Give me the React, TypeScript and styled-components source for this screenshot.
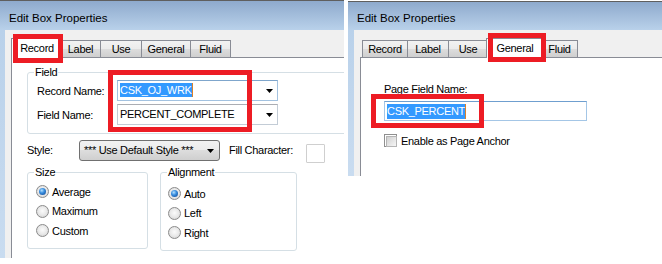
import React from "react";
import styled, { createGlobalStyle, css } from "styled-components";

const Global = createGlobalStyle`
  html, body { margin: 0; padding: 0; background: #fff; }
  body { font-family: "Liberation Sans", Arial, sans-serif; font-size: 11px; letter-spacing: -0.3px; color: #000; }
  * { box-sizing: border-box; }
`;

const Page = styled.div`
  display: flex;
  align-items: flex-start;
  width: 662px;
  height: 264px;
  overflow: hidden;
  background: #fff;
`;

const Window = styled.div<{ $w?: number; $h: number; $top: number; $left: number }>`
  position: relative;
  display: flex;
  flex-direction: column;
  flex: ${(p) => (p.$w ? "0 0 auto" : "1 1 auto")};
  width: ${(p) => (p.$w ? `${p.$w}px` : "auto")};
  height: ${(p) => p.$h}px;
  margin-top: ${(p) => p.$top}px;
  margin-left: ${(p) => p.$left}px;
  border-top: 1px solid #5f5f5f;
  overflow: hidden;
`;

const TitleBar = styled.div<{ $h: number }>`
  flex: 0 0 ${(p) => p.$h}px;
  height: ${(p) => p.$h}px;
  padding: ${(p) => p.$h - 19}px 0 0 9px;
  background: linear-gradient(to bottom, #8eaacd, #b9d1ea);
  font-size: 11.5px;
  letter-spacing: 0;
  line-height: 14px;
  white-space: nowrap;
`;

const Frame = styled.div`
  flex: 1 1 auto;
  display: flex;
  min-height: 0;
`;

const Edge = styled.div<{ $w: number }>`
  flex: 0 0 ${(p) => p.$w}px;
  background: linear-gradient(to bottom, #b9d1ea, #c9dcf0);
`;

const Client = styled.div`
  flex: 1 1 auto;
  display: flex;
  flex-direction: column;
  padding: 8px 0 0 6px;
  background: #f0f0f0;
  min-width: 0;
`;

const TabStrip = styled.div`
  position: relative;
  z-index: 1;
  display: flex;
  align-items: flex-end;
  height: 19px;
  padding-left: 2px;
`;

const Tab = styled.div<{ $w: number; $sel?: boolean }>`
  flex: 0 0 auto;
  width: ${(p) => p.$w}px;
  height: 17px;
  border: 1px solid #898c95;
  border-bottom: none;
  border-left-width: 0;
  background: linear-gradient(to bottom, #f2f2f2 0%, #ebebeb 50%, #dddddd 50%, #cfcfcf 100%);
  text-align: center;
  line-height: 16px;
  white-space: nowrap;
  &:first-child { border-left-width: 1px; }
  ${(p) =>
    p.$sel &&
    css`
      width: ${p.$w + 4}px;
      height: 20px;
      margin: 0 -2px -1px;
      border-left-width: 1px;
      background: #fff;
      line-height: 18px;
      position: relative;
      z-index: 2;
    `}
`;

const Panel = styled.div<{ $pad: string }>`
  flex: 1 1 auto;
  display: flex;
  flex-direction: column;
  align-items: flex-start;
  padding: ${(p) => p.$pad};
  background: #fff;
  border-top: 1px solid #898c95;
  border-left: 1px solid #898c95;
  min-width: 0;
`;

const Group = styled.fieldset<{ $w: number; $mt: number }>`
  flex: 0 0 auto;
  margin: ${(p) => p.$mt}px 0 0 0;
  padding: 0;
  min-width: 0;
  width: ${(p) => p.$w}px;
  border: 1px solid #d5dfe5;
  border-radius: 3px;
`;

const Legend = styled.legend`
  margin-left: 6px;
  padding: 0 1px;
  font-size: 11px;
  line-height: 12px;
`;

const FieldGrid = styled.div`
  display: grid;
  grid-template-columns: 80px 161px;
  grid-auto-rows: 21px;
  row-gap: 3px;
  align-items: center;
  padding: 2px 0 8px 9px;
`;

const Combo = styled.div<{ $focus?: boolean }>`
  display: flex;
  align-items: center;
  height: 21px;
  padding: 0 4px 0 2px;
  background: #fff;
  border: 1px solid ${(p) => (p.$focus ? "#a3c2e0" : "#c3ccd6")};
  border-top-color: ${(p) => (p.$focus ? "#7fa6cc" : "#abadb3")};
`;

const ComboText = styled.span`
  flex: 1 1 auto;
  white-space: nowrap;
  line-height: 13px;
`;

const Selected = styled.span`
  background: #3399ff;
  color: #fff;
  padding: 1px 0;
  border-right: 1px solid #d9822b;
`;

const Arrow = () => (
  <svg width="7" height="4" viewBox="0 0 7 4" style={{ flex: "0 0 auto" }}>
    <path d="M0 0H7L3.5 4Z" fill="#000" />
  </svg>
);

const StyleRow = styled.div`
  display: flex;
  align-items: flex-start;
  height: 20px;
  margin-top: 6px;
`;

const RowLabel = styled.span<{ $w: number; $ml?: number }>`
  flex: 0 0 ${(p) => p.$w}px;
  margin-left: ${(p) => p.$ml ?? 0}px;
  line-height: 21px;
  white-space: nowrap;
`;

const StyleButton = styled.div`
  flex: 0 0 141px;
  display: flex;
  align-items: center;
  height: 21px;
  padding: 0 5px 0 4px;
  border: 1px solid #707070;
  border-radius: 3px;
  background: linear-gradient(to bottom, #f2f2f2 0%, #ebebeb 50%, #dddddd 50%, #cfcfcf 100%);
  white-space: nowrap;
`;

const FillBox = styled.div`
  flex: 0 0 19px;
  width: 19px;
  height: 19px;
  margin-top: 4px;
  border: 1px solid #cfcfcf;
  border-radius: 1px;
  background: #fff;
`;

const GroupsRow = styled.div`
  display: flex;
  align-items: flex-start;
  gap: 12px;
  margin-top: 6px;
`;

const RadioList = styled.div<{ $pt: number; $pl: number }>`
  display: flex;
  flex-direction: column;
  padding: ${(p) => p.$pt}px 0 7px ${(p) => p.$pl}px;
`;

const RadioRow = styled.div`
  display: flex;
  align-items: center;
  gap: 3px;
  height: 19.5px;
`;

const RadioDot = styled.span<{ $on?: boolean }>`
  position: relative;
  flex: 0 0 13px;
  width: 13px;
  height: 13px;
  border-radius: 50%;
  border: 1px solid #8b8b8b;
  background: radial-gradient(circle at 50% 45%, #fbfbfb 0%, #e9e9e9 50%, #cdcdcd 100%);
  ${(p) =>
    p.$on &&
    css`
      &::after {
        content: "";
        position: absolute;
        left: 2px;
        top: 2px;
        width: 7px;
        height: 7px;
        border-radius: 50%;
        background: radial-gradient(circle at 40% 35%, #b6e2ff 0%, #3a8fe0 40%, #0c3f8a 100%);
      }
    `}
`;

const PlainLabel = styled.div`
  line-height: 13px;
  white-space: nowrap;
`;

const TextInput = styled.div`
  display: flex;
  align-items: center;
  width: 203px;
  height: 20px;
  margin-top: 5px;
  padding: 0 2px;
  border: 1px solid #a4c6e6;
  border-top-color: #6f9fcf;
  background: #fff;
  line-height: 13px;
`;

const CheckRow = styled.div`
  display: flex;
  align-items: center;
  gap: 4px;
  margin-top: 13px;
  white-space: nowrap;
`;

const CheckBox = styled.span`
  flex: 0 0 13px;
  width: 13px;
  height: 13px;
  border: 1px solid #8f8f8f;
  padding: 1px;
  background: #fff;
  &::before {
    content: "";
    display: block;
    width: 100%;
    height: 100%;
    border: 1px solid #b4b4b4;
    background: linear-gradient(135deg, #d0d0d0, #f6f6f6);
  }
`;

const Callout = styled.div<{ $x: number; $y: number; $w: number; $h: number }>`
  position: absolute;
  left: ${(p) => p.$x}px;
  top: ${(p) => p.$y}px;
  width: ${(p) => p.$w}px;
  height: ${(p) => p.$h}px;
  border: 5px solid #ed1c24;
  z-index: 5;
  pointer-events: none;
`;

const tabNames = ["Record", "Label", "Use", "General", "Fluid"];

function Tabs({ widths, sel }: { widths: number[]; sel: number }) {
  return (
    <TabStrip>
      {tabNames.map((n, i) => (
        <Tab key={n} $w={widths[i]} $sel={i === sel}>
          {n}
        </Tab>
      ))}
    </TabStrip>
  );
}

function Radio({ label, on }: { label: string; on?: boolean }) {
  return (
    <RadioRow>
      <RadioDot $on={on} />
      <span>{label}</span>
    </RadioRow>
  );
}

export default function App() {
  return (
    <>
      <Global />
      <Page>
        <Window $w={344} $h={258} $top={0} $left={0}>
          <TitleBar $h={29}>Edit Box Properties</TitleBar>
          <Frame>
            <Edge $w={5} />
            <Client>
              <Tabs widths={[48, 40, 41, 49, 40]} sel={0} />
              <Panel $pad="0 0 0 15px">
                <Group $w={330} $mt={8}>
                  <Legend>Field</Legend>
                  <FieldGrid>
                    <span>Record Name:</span>
                    <Combo $focus>
                      <ComboText>
                        <Selected>CSK_OJ_WRK</Selected>
                      </ComboText>
                      <Arrow />
                    </Combo>
                    <span>Field Name:</span>
                    <Combo>
                      <ComboText>PERCENT_COMPLETE</ComboText>
                      <Arrow />
                    </Combo>
                  </FieldGrid>
                </Group>
                <StyleRow>
                  <RowLabel $w={52}>Style:</RowLabel>
                  <StyleButton>
                    <ComboText>*** Use Default Style ***</ComboText>
                    <Arrow />
                  </StyleButton>
                  <RowLabel $w={77} $ml={9}>
                    Fill Character:
                  </RowLabel>
                  <FillBox />
                </StyleRow>
                <GroupsRow>
                  <Group $w={121} $mt={0}>
                    <Legend>Size</Legend>
                    <RadioList $pt={4} $pl={8}>
                      <Radio label="Average" on />
                      <Radio label="Maximum" />
                      <Radio label="Custom" />
                    </RadioList>
                  </Group>
                  <Group $w={137} $mt={0}>
                    <Legend>Alignment</Legend>
                    <RadioList $pt={6} $pl={7}>
                      <Radio label="Auto" on />
                      <Radio label="Left" />
                      <Radio label="Right" />
                    </RadioList>
                  </Group>
                </GroupsRow>
              </Panel>
            </Client>
          </Frame>
          <Callout $x={13} $y={33} $w={50} $h={29} />
          <Callout $x={108} $y={69} $w={144} $h={62} />
        </Window>

        <Window $h={175} $top={1} $left={4}>
          <TitleBar $h={28}>Edit Box Properties</TitleBar>
          <Frame>
            <Edge $w={6} />
            <Client>
              <Tabs widths={[46, 41, 39, 54, 36]} sel={3} />
              <Panel $pad="25px 0 0 23px">
                <PlainLabel>Page Field Name:</PlainLabel>
                <TextInput>
                  <Selected>CSK_PERCENT</Selected>
                </TextInput>
                <CheckRow>
                  <CheckBox />
                  <span>Enable as Page Anchor</span>
                </CheckRow>
              </Panel>
            </Client>
          </Frame>
          <Callout $x={140} $y={31} $w={58} $h={29} />
          <Callout $x={23} $y={92} $w={113} $h={34} />
        </Window>
      </Page>
    </>
  );
}
